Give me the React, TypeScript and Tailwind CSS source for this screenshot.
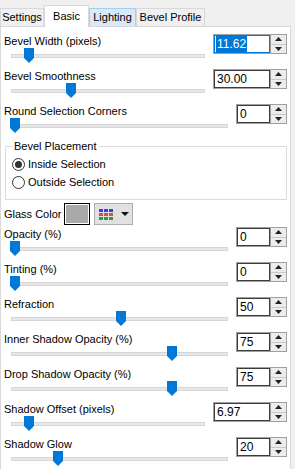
import type { ReactNode } from 'react';

const FONT = { fontFamily: '"Liberation Sans", Arial, sans-serif' };

interface SliderRow {
  label: string;
  value: string;
  thumb: number; // thumb centre, page x
  wide?: boolean;
  focused?: boolean;
}

const TOP_ROWS: SliderRow[] = [
  { label: 'Bevel Width (pixels)', value: '11.62', thumb: 28, wide: true, focused: true },
  { label: 'Bevel Smoothness', value: '30.00', thumb: 70, wide: true },
  { label: 'Round Selection Corners', value: '0', thumb: 14 },
];

const BOTTOM_ROWS: SliderRow[] = [
  { label: 'Opacity (%)', value: '0', thumb: 14 },
  { label: 'Tinting (%)', value: '0', thumb: 14 },
  { label: 'Refraction', value: '50', thumb: 120 },
  { label: 'Inner Shadow Opacity (%)', value: '75', thumb: 171 },
  { label: 'Drop Shadow Opacity (%)', value: '75', thumb: 171 },
  { label: 'Shadow Offset (pixels)', value: '6.97', thumb: 28, wide: true },
  { label: 'Shadow Glow', value: '20', thumb: 57 },
];

function Tab({ children, active, hover, width }: { children: ReactNode; active?: boolean; hover?: boolean; width: string }) {
  if (active) {
    return (
      <div className={`relative z-10 -mb-px flex h-[22px] items-start justify-center whitespace-nowrap border border-b-0 border-[#d9d9d9] bg-white pt-[5px] ${width}`}>
        {children}
      </div>
    );
  }
  return (
    <div
      className={`flex h-[18px] items-center justify-center whitespace-nowrap border border-b-0 ${width} ${
        hover ? 'border-[#a8cdf0] bg-[#d8eaf9]' : 'border-[#d9d9d9] bg-[#f0f0f0]'
      }`}
    >
      {children}
    </div>
  );
}

function SpinBox({ value, wide, focused }: { value: string; wide?: boolean; focused?: boolean }) {
  return (
    <div className={`flex h-[20px] shrink-0 border border-[#a0a0a0] ${wide ? 'w-[74px]' : 'w-[51px]'}`}>
      <div
        className={`flex flex-1 items-center border pl-[1px] text-[12px] leading-none ${
          focused ? 'border-[#0078d7]' : 'border-[#3c3c3c]'
        }`}
      >
        {focused ? <span className="bg-[#0078d7] px-[1px] py-[2px] text-white">{value}</span> : <span className="px-[1px]">{value}</span>}
      </div>
      <div className="flex w-[16px] flex-col border-l border-[#a0a0a0]">
        <div className="flex flex-1 items-center justify-center border-b border-[#c8c8c8] bg-[#ececec]">
          <svg width="7" height="4" viewBox="0 0 7 4">
            <polygon points="0,4 7,4 3.5,0" fill="#222" />
          </svg>
        </div>
        <div className="flex flex-1 items-center justify-center bg-[#ececec]">
          <svg width="7" height="4" viewBox="0 0 7 4">
            <polygon points="0,0 7,0 3.5,4" fill="#222" />
          </svg>
        </div>
      </div>
    </div>
  );
}

function Slider({ thumb }: { thumb: number }) {
  return (
    <div className="relative ml-[10px] mr-[8px] h-[16px]">
      <div className="absolute left-0 right-0 top-[6px] h-[4px] border border-[#d6d6d6] bg-[#e7e7e7]" />
      <svg
        className="absolute top-0"
        style={{ left: thumb - 10 - 5 }}
        width="10"
        height="15"
        viewBox="0 0 10 15"
      >
        <polygon points="0,0 10,0 10,10 5,15 0,10" fill="#0078d7" />
      </svg>
    </div>
  );
}

function Row({ row }: { row: SliderRow }) {
  return (
    <div className="flex h-[35px]">
      <div className="flex-1">
        <div className="h-[14px] whitespace-nowrap pl-[3px] text-[11px] leading-[14px]">{row.label}</div>
        <Slider thumb={row.thumb} />
      </div>
      <SpinBox value={row.value} wide={row.wide} focused={row.focused} />
    </div>
  );
}

function Radio({ label, checked }: { label: string; checked?: boolean }) {
  return (
    <div className="flex h-[18px] items-center gap-[3px]">
      <div className="flex h-[13px] w-[13px] items-center justify-center rounded-full border border-[#333]">
        {checked && <div className="h-[7px] w-[7px] rounded-full bg-[#333]" />}
      </div>
      <span className="text-[11px] leading-none">{label}</span>
    </div>
  );
}

function ColorGrid() {
  const rows = ['#3d3de6', '#e04a4a', '#22a046'];
  return (
    <div className="flex flex-col gap-[1px]">
      {rows.map((c) => (
        <div key={c} className="flex gap-[1px]">
          <div className="h-[3px] w-[4px]" style={{ backgroundColor: c }} />
          <div className="h-[3px] w-[4px]" style={{ backgroundColor: c }} />
          <div className="h-[3px] w-[4px]" style={{ backgroundColor: c }} />
        </div>
      ))}
    </div>
  );
}

export default function App() {
  return (
    <div className="h-[469px] w-[295px] overflow-hidden bg-[#f0f0f0] text-black" style={FONT}>
      <div className="flex h-[26px] items-end text-[11px] leading-none">
        <Tab width="w-[44px]">Settings</Tab>
        <Tab width="w-[45px]" active>
          Basic
        </Tab>
        <Tab width="w-[47px]" hover>
          Lighting
        </Tab>
        <Tab width="w-[69px]">Bevel Profile</Tab>
      </div>
      <div className="h-[460px] w-[291px] border border-[#d9d9d9] bg-white pr-[3px] pt-[7px]">
        {TOP_ROWS.map((r) => (
          <Row key={r.label} row={r} />
        ))}

        <div className="relative mb-[3px] ml-[4px] mr-[0px] mt-[7px] h-[54px] border border-[#dcdcdc] pl-[6px] pt-[8px]">
          <div className="absolute left-[6px] top-[-8px] bg-white px-[2px] text-[11px] leading-[14px]">Bevel Placement</div>
          <Radio label="Inside Selection" checked />
          <Radio label="Outside Selection" />
        </div>

        <div className="flex h-[22px] items-center pl-[3px]">
          <span className="w-[60px] shrink-0 whitespace-nowrap text-[11px] leading-none">Glass Color</span>
          <div className="h-[22px] w-[26px] shrink-0 border border-black bg-white p-[1px]">
            <div className="h-full w-full bg-[#a9a9a9]" />
          </div>
          <div className="ml-[4px] flex h-[22px] w-[39px] shrink-0 items-center border border-[#adadad] bg-[#e1e1e1] pl-[4px]">
            <ColorGrid />
            <svg className="ml-[8px]" width="8" height="4" viewBox="0 0 8 4">
              <polygon points="0,0 8,0 4,4" fill="#111" />
            </svg>
          </div>
        </div>

        <div className="mt-[2px]">
          {BOTTOM_ROWS.map((r) => (
            <Row key={r.label} row={r} />
          ))}
        </div>
      </div>
    </div>
  );
}
